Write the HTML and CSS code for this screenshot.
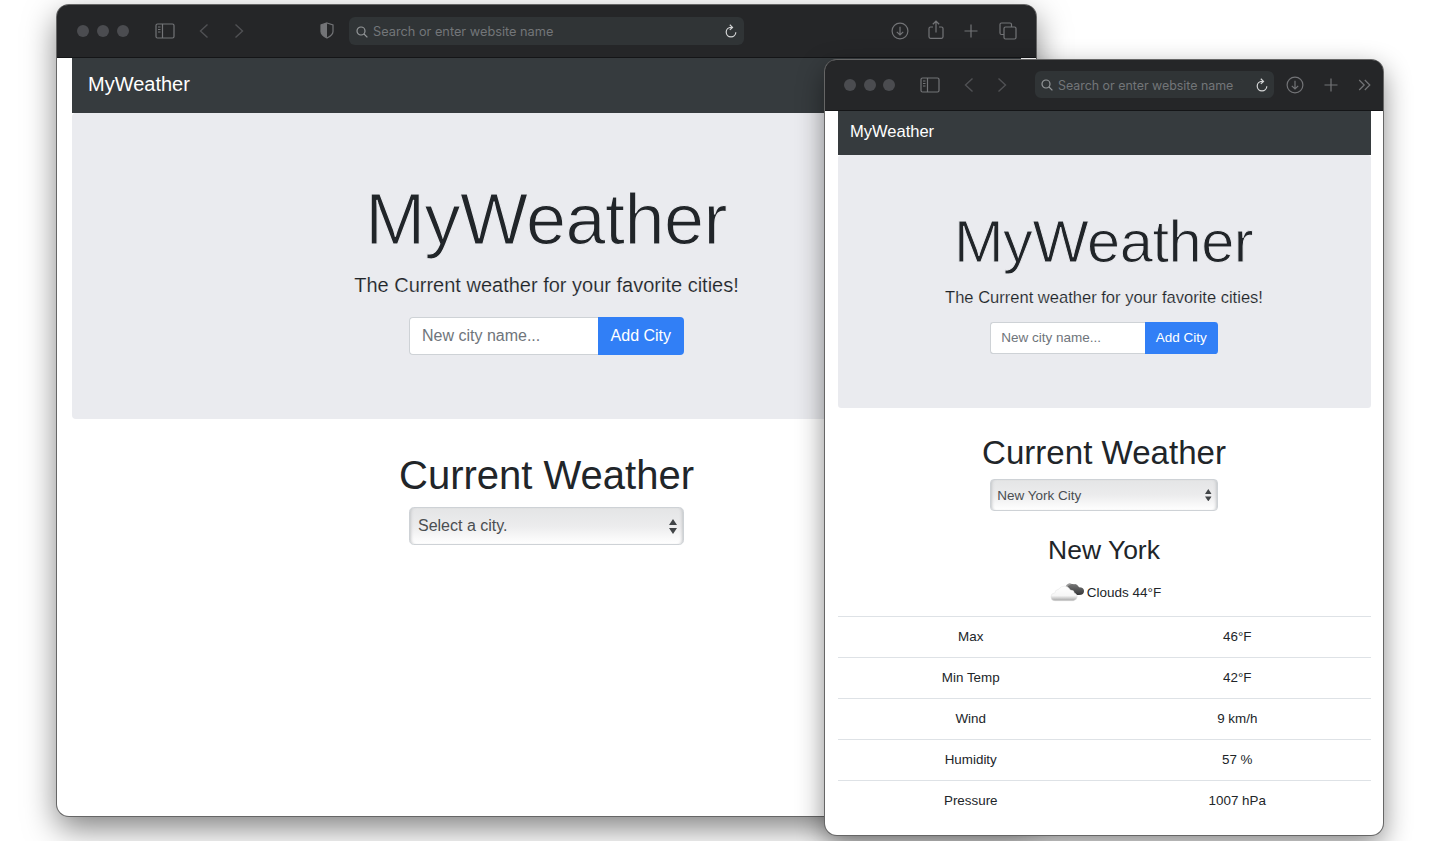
FILE: index.html
```html
<!DOCTYPE html>
<html lang="en">
<head>
<meta charset="utf-8">
<title>MyWeather</title>
<link rel="stylesheet" href="styles.css">
</head>
<body>
<svg width="0" height="0" class="defs">
  <defs>
    <symbol id="sidebar" viewBox="0 0 20 16"><rect x="1" y="1" width="18" height="14" rx="1.5"/><path d="M7.5 1v14M3 4h2.5M3 6.500h2.500M3 9h2.500"/></symbol>
    <symbol id="back" viewBox="0 0 10 16"><path d="M8.500 1.500L1.500 8l7 6.500"/></symbol>
    <symbol id="forward" viewBox="0 0 10 16"><path d="M1.500 1.500L8.500 8l-7 6.500"/></symbol>
    <symbol id="search" viewBox="0 0 12 12"><circle cx="5" cy="5" r="4"/><path d="M8 8l3.400 3.400"/></symbol>
    <symbol id="reload" viewBox="0 0 12 14"><path d="M6.500 3.300H6A4.800 4.800 0 1 0 10.800 8.200M4.800.8l2.700 2.600-2.700 2.500"/></symbol>
    <symbol id="download" viewBox="0 0 18 18"><circle cx="9" cy="9" r="7.900"/><path d="M9 4.800v8M5.800 9.800L9 13l3.200-3.200"/></symbol>
    <symbol id="share" viewBox="0 0 16 20"><path d="M5 7H2.500Q1 7 1 8.500v8.300q0 1.500 1.500 1.500h11q1.500 0 1.500-1.500V8.500Q15 7 13.500 7H11M8 12.500V1.200M4.800 4.300L8 1.200l3.200 3.100"/></symbol>
    <symbol id="plus" viewBox="0 0 14 14"><path d="M7 .5v13M.5 7h13"/></symbol>
    <symbol id="tabs" viewBox="0 0 18 18"><path d="M5 12.500H2.500Q1 12.500 1 11V2.500Q1 1 2.500 1H11q1.500 0 1.500 1.500V5"/><rect x="5" y="5" width="12" height="12" rx="1.500"/></symbol>
    <symbol id="more" viewBox="0 0 13 12"><path d="M1.200 1l5 5-5 5M6.800 1l5 5-5 5"/></symbol>
    <symbol id="arrows" viewBox="0 0 8 15"><path d="M4 0l4 6H0zM0 9h8l-4 6z"/></symbol>
  </defs>
</svg>

<section class="window window-wide">
  <header class="toolbar">
    <div class="lights"><i></i><i></i><i></i></div>
    <svg class="icon i-sidebar"><use href="#sidebar"/></svg>
    <svg class="icon dim i-back"><use href="#back"/></svg>
    <svg class="icon dim i-forward"><use href="#forward"/></svg>
    <svg class="icon i-shield" viewBox="0 0 14 17"><path d="M7 1l6 2v6.500q0 3.500-6 6.500-6-3-6-6.500V3z"/><path class="solid" d="M7 1L1 3v6.500q0 3.500 6 6.500z"/></svg>
    <div class="address"><svg class="icon i-search"><use href="#search"/></svg><span>Search or enter website name</span><svg class="icon i-reload"><use href="#reload"/></svg></div>
    <div class="actions">
      <svg class="icon i-download"><use href="#download"/></svg>
      <svg class="icon i-share"><use href="#share"/></svg>
      <svg class="icon i-plus"><use href="#plus"/></svg>
      <svg class="icon i-tabs"><use href="#tabs"/></svg>
    </div>
  </header>
  <main class="page">
    <nav class="navbar">MyWeather</nav>
    <div class="jumbotron">
      <h1>MyWeather</h1>
      <p class="lead">The Current weather for your favorite cities!</p>
      <div class="group"><div class="field">New city name...</div><div class="button">Add City</div></div>
    </div>
    <h2>Current Weather</h2>
    <div class="select"><span>Select a city.</span><svg class="arrows"><use href="#arrows"/></svg></div>
  </main>
</section>

<section class="window window-narrow">
  <header class="toolbar">
    <div class="lights"><i></i><i></i><i></i></div>
    <svg class="icon i-sidebar"><use href="#sidebar"/></svg>
    <svg class="icon dim i-back"><use href="#back"/></svg>
    <svg class="icon dim i-forward"><use href="#forward"/></svg>
    <div class="address"><svg class="icon i-search"><use href="#search"/></svg><span>Search or enter website name</span><svg class="icon i-reload"><use href="#reload"/></svg></div>
    <div class="actions">
      <svg class="icon i-download"><use href="#download"/></svg>
      <svg class="icon i-plus"><use href="#plus"/></svg>
      <svg class="icon i-more"><use href="#more"/></svg>
    </div>
  </header>
  <main class="page">
    <nav class="navbar">MyWeather</nav>
    <div class="jumbotron">
      <h1>MyWeather</h1>
      <p class="lead">The Current weather for your favorite cities!</p>
      <div class="group"><div class="field">New city name...</div><div class="button">Add City</div></div>
    </div>
    <h2>Current Weather</h2>
    <div class="select"><span>New York City</span><svg class="arrows"><use href="#arrows"/></svg></div>
    <h3>New York</h3>
    <div class="summary">
      <svg class="cloud" viewBox="0 0 36 20">
        <defs>
          <linearGradient id="white-cloud" x1="0" y1="0" x2="0" y2="1"><stop offset="0" stop-color="#fff"/><stop offset=".65" stop-color="#f6f6f6"/><stop offset="1" stop-color="#a4a4a4"/></linearGradient>
          <linearGradient id="dark-cloud" x1="0" y1="0" x2="0" y2="1"><stop offset="0" stop-color="#777"/><stop offset="1" stop-color="#37383a"/></linearGradient>
        </defs>
        <path fill="#9a9a9a" d="M16 6q0-4 4-5 3 0 4 3l-3 4z"/>
        <path fill="url(#dark-cloud)" d="M18 7q-1-3 2-4 2-2 5-1 2-1 5 3 5 0 5 4 0 4-5 4h-6z"/>
        <path fill="url(#white-cloud)" stroke="#e2e2e2" stroke-width=".5" d="M5 19q-4 0-4-4t4-4q0-3 4-4 2-3 6-3 4 0 6 4 4 0 4 3 3 1 3 4t-4 4z"/>
      </svg>
      <span>Clouds 44°F</span>
    </div>
    <div class="table">
      <div class="row"><span>Max</span><span>46°F</span></div>
      <div class="row"><span>Min Temp</span><span>42°F</span></div>
      <div class="row"><span>Wind</span><span>9 km/h</span></div>
      <div class="row"><span>Humidity</span><span>57 %</span></div>
      <div class="row"><span>Pressure</span><span>1007 hPa</span></div>
    </div>
  </main>
</section>
</body>
</html>
```

FILE: styles.css
```css
* { box-sizing: border-box; }
body { margin: 0; height: 841px; position: relative; overflow: hidden; background: #fff; color: #212529; font-family: "Liberation Sans", Arial, sans-serif; }
.defs { position: absolute; }

/* Browser windows */
.window { position: absolute; background: #fff; border-radius: 12px; }
.window-wide { left: 57px; top: 5px; width: 979px; height: 811px; font-size: 16px; box-shadow: 0 0 0 1px #666, 0 12px 32px rgba(0,0,0,.5); }
.window-narrow { left: 825px; top: 60px; width: 558px; height: 775px; font-size: 13.24px; box-shadow: 0 0 0 1px #666, 0 10px 28px rgba(0,0,0,.48); }

/* Toolbar */
.toolbar { display: flex; align-items: center; height: 52.500px; background: #252628; border-radius: 11px 11px 0 0; border-bottom: 1px solid #141517; }
.window-narrow .toolbar { height: 50.500px; }
.lights { display: flex; gap: 8px; margin-left: 20px; }
.lights i { width: 12px; height: 12px; border-radius: 50%; background: #4b4c50; }
.icon { display: block; flex: none; fill: none; stroke: #737477; stroke-width: 1.2; }
.icon .solid { fill: #737477; stroke: none; }
.dim { stroke: #505154; stroke-width: 1.4; }
.i-sidebar { width: 20px; height: 16px; margin-left: 25.500px; }
.i-back { width: 10px; height: 16px; margin-left: 24.500px; }
.i-forward { width: 10px; height: 16px; margin-left: 25px; }
.i-shield { width: 14px; height: 17px; margin-left: 76px; }
.address { display: flex; align-items: center; width: 395px; height: 28px; margin: 0 0 0 15px; padding: 2px 7px 0 7px; border-radius: 6px; background: #303436; color: #737679; font: 12.750px Inter, sans-serif; }
.address span { margin-left: 5px; white-space: nowrap; }
.i-search { width: 12px; height: 12px; stroke: #95989a; }
.i-reload { width: 12px; height: 14px; margin: -1px 0 0 auto; stroke: #d5d6d7; }
.actions { display: flex; align-items: center; margin-left: auto; margin-right: 19px; }
.i-download { width: 18px; height: 18px; }
.i-share { width: 16px; height: 20px; margin: -2px 0 0 19px; }
.i-plus { width: 14px; height: 14px; margin-left: 20px; }
.i-tabs { width: 18px; height: 18px; margin-left: 21px; }

.window-narrow .lights { gap: 7.500px; margin-left: 19px; }
.window-narrow .i-sidebar { margin-left: 25px; }
.window-narrow .i-back, .window-narrow .i-forward { margin-left: 23.500px; }
.window-narrow .address { width: 239px; height: 27px; margin: 0 0 0 28px; padding: 1px 6px 0; font-size: 12.400px; }
.window-narrow .actions { margin-right: 12.500px; }
.window-narrow .i-plus { margin-left: 20px; }
.i-more { width: 13px; height: 12px; margin-left: 20px; }

/* Page content, sized in em of each window */
.page { padding: 0 15px; text-align: center; }
.window-narrow .page { padding: 0 12.500px; }
.navbar { height: 55.500px; padding: 0 .8em; background: #363b3e; color: #fff; font-size: 1.25em; line-height: 53px; text-align: left; }
.window-narrow .navbar { height: 44px; padding-left: .75em; line-height: 42px; }
.jumbotron { padding: 4em 0; background: #eaebef; border-radius: .25em; }
h1, h2, h3, p { margin: 0; font-weight: 400; }
h1 { margin: -.02em 0 .131em; font-size: 4.500em; line-height: 1.2; letter-spacing: -.008em; text-indent: -.014em; -webkit-text-stroke: .016em #eaebef; }
.lead { margin: -.05em 0 .85em; font-size: 1.25em; line-height: 1.5; -webkit-text-stroke: .15px #eaebef; }
.group { display: flex; width: 17.190em; height: 2.375em; margin: 0 auto; }
.field { flex: 1; padding: 0 .75em; border: 1px solid #ced2d6; border-right: 0; border-radius: .25em 0 0 .25em; background: #fff; color: #6f757b; line-height: 2.200em; text-align: left; }
.button { width: 5.400em; border-radius: 0 .25em .25em 0; background: #317ff6; color: #fff; line-height: 2.375em; }
h2 { margin: .8em 0 .2em; font-size: 2.5em; line-height: 1.2; }
.select { display: flex; align-items: center; justify-content: space-between; width: 17.190em; height: 2.375em; margin: 0 auto; padding: 0 .4em 0 .5em; border: 1px solid #ced2d6; border-radius: .3em; background: linear-gradient(#e4e5e6, #ececed 50%, #fff); box-shadow: inset 3px 0 3px -2px #c5c7c9, inset -3px 0 3px -2px #c5c7c9; color: #4a4e52; }
.arrows { width: .5em; height: .94em; fill: #424548; }

.window-narrow .jumbotron { height: 253.500px; }
.window-narrow .lead { margin: .02em 0 .72em; }
.window-narrow .field { font-size: 13.500px; padding: 0 10px; line-height: 30px; }
.window-narrow .button { width: 73px; font-size: 13.500px; line-height: 32px; }
.window-narrow .select { padding-left: 6px; }
.window-narrow .select span { font-size: 13.500px; }
.window-narrow h2 { margin-top: .76em; margin-bottom: .2em; }
h3 { margin-top: .92em; font-size: 2em; line-height: 1.2; }
.summary { display: flex; align-items: center; justify-content: center; height: 48.500px; gap: 2px; padding: 2px 0 0 3px; font-size: 13.500px; }
.cloud { width: 35px; height: 20px; }
.row { display: grid; grid-template-columns: 1fr 1fr; height: 41.200px; border-top: 1px solid #dee2e6; font-size: 13.400px; line-height: 40px; }
```
